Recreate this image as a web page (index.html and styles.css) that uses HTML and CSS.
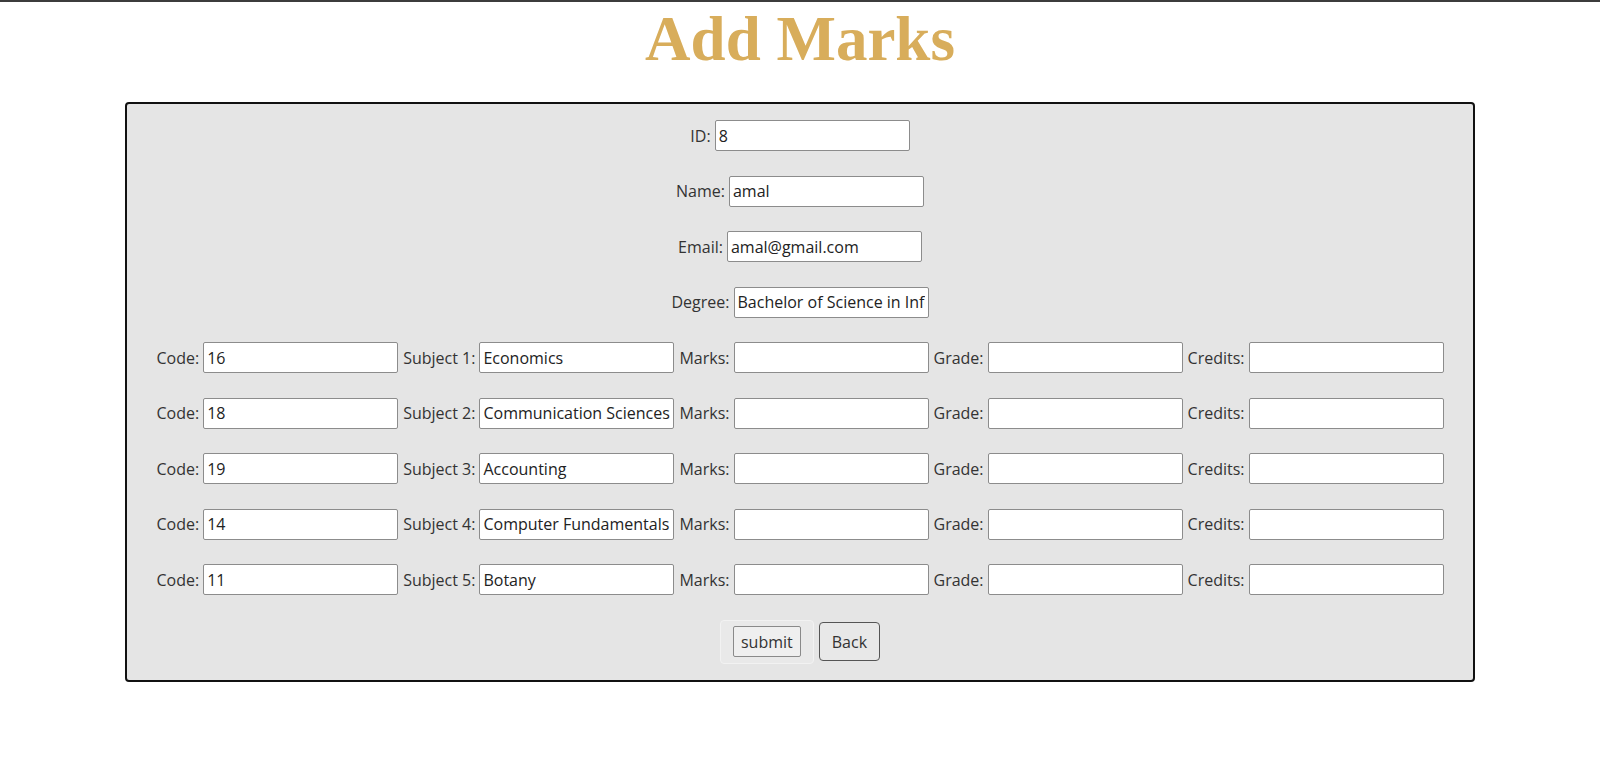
FILE: index.html
```html
<!DOCTYPE html>
<html>
<head>
<meta charset="utf-8">
<title>Add Marks</title>
<link rel="stylesheet" href="styles.css">
</head>
<body>
<div class="topbar"></div>
<h1 class="title">Add Marks</h1>
<form class="panel">
  <div class="field"><label>ID:</label><input type="text" value="8"></div>
  <div class="field"><label>Name:</label><input type="text" value="amal"></div>
  <div class="field"><label>Email:</label><input type="text" value="amal@gmail.com"></div>
  <div class="field"><label>Degree:</label><input type="text" value="Bachelor of Science in Information Technology"></div>

  <div class="row">
    <div class="field"><label>Code:</label><input type="text" value="16"></div>
    <div class="field"><label>Subject 1:</label><input type="text" value="Economics"></div>
    <div class="field"><label>Marks:</label><input type="text"></div>
    <div class="field"><label>Grade:</label><input type="text"></div>
    <div class="field"><label>Credits:</label><input type="text"></div>
  </div>
  <div class="row">
    <div class="field"><label>Code:</label><input type="text" value="18"></div>
    <div class="field"><label>Subject 2:</label><input type="text" value="Communication Sciences"></div>
    <div class="field"><label>Marks:</label><input type="text"></div>
    <div class="field"><label>Grade:</label><input type="text"></div>
    <div class="field"><label>Credits:</label><input type="text"></div>
  </div>
  <div class="row">
    <div class="field"><label>Code:</label><input type="text" value="19"></div>
    <div class="field"><label>Subject 3:</label><input type="text" value="Accounting"></div>
    <div class="field"><label>Marks:</label><input type="text"></div>
    <div class="field"><label>Grade:</label><input type="text"></div>
    <div class="field"><label>Credits:</label><input type="text"></div>
  </div>
  <div class="row">
    <div class="field"><label>Code:</label><input type="text" value="14"></div>
    <div class="field"><label>Subject 4:</label><input type="text" value="Computer Fundamentals"></div>
    <div class="field"><label>Marks:</label><input type="text"></div>
    <div class="field"><label>Grade:</label><input type="text"></div>
    <div class="field"><label>Credits:</label><input type="text"></div>
  </div>
  <div class="row">
    <div class="field"><label>Code:</label><input type="text" value="11"></div>
    <div class="field"><label>Subject 5:</label><input type="text" value="Botany"></div>
    <div class="field"><label>Marks:</label><input type="text"></div>
    <div class="field"><label>Grade:</label><input type="text"></div>
    <div class="field"><label>Credits:</label><input type="text"></div>
  </div>

  <div class="actions">
    <div class="submit-wrap"><button type="button" class="btn-submit">submit</button></div>
    <button type="button" class="btn-back">Back</button>
  </div>
</form>
</body>
</html>
```

FILE: styles.css
```css
html, body {
  margin: 0;
  padding: 0;
  background: #ffffff;
}

body {
  font-family: "Open Sans", "Noto Sans", sans-serif;
  font-size: 16px;
  color: #333333;
}

.topbar {
  height: 2px;
  background: #3c3c3c;
}

.title {
  margin: 1px 0 27px;
  font-family: "Liberation Serif", "Times New Roman", serif;
  font-weight: bold;
  font-size: 63px;
  line-height: 72px;
  text-align: center;
  color: #d8ad5b;
}

.panel {
  box-sizing: border-box;
  width: 1350px;
  margin: 0 auto;
  padding: 16px 0 16px;
  background: #e5e5e5;
  border: 2px solid #111111;
  border-radius: 4px;
  display: flex;
  flex-direction: column;
  align-items: center;
  gap: 24.5px;
}

.row {
  display: flex;
  justify-content: center;
  gap: 5px;
}

.field {
  display: flex;
  align-items: center;
  gap: 4px;
  height: 31px;
}

.field label {
  white-space: nowrap;
  line-height: 20px;
}

.field input {
  box-sizing: border-box;
  width: 195px;
  height: 31px;
  margin: 0;
  padding: 0 3px;
  font-family: "Open Sans", "Noto Sans", sans-serif;
  font-size: 16px;
  color: #222222;
  background: #ffffff;
  border: 1px solid #8c8c8c;
  border-radius: 2px;
  outline: none;
}

.actions {
  display: flex;
  align-items: center;
  gap: 5px;
}

.submit-wrap {
  box-sizing: border-box;
  height: 44px;
  padding: 0 12px;
  display: flex;
  align-items: center;
  background: #e9e9e9;
  border: 1px solid #f2f2f2;
  border-radius: 4px;
}

.btn-submit {
  box-sizing: border-box;
  height: 31px;
  padding: 0 7px;
  font-family: "Open Sans", "Noto Sans", sans-serif;
  font-size: 16px;
  color: #333333;
  background: #efefef;
  border: 1px solid #8a8a8a;
  border-radius: 2px;
}

.btn-back {
  box-sizing: border-box;
  height: 39px;
  padding: 0 12px;
  font-family: "Open Sans", "Noto Sans", sans-serif;
  font-size: 16px;
  color: #333333;
  background: #e8e8e8;
  border: 1px solid #555555;
  border-radius: 4px;
}
```
